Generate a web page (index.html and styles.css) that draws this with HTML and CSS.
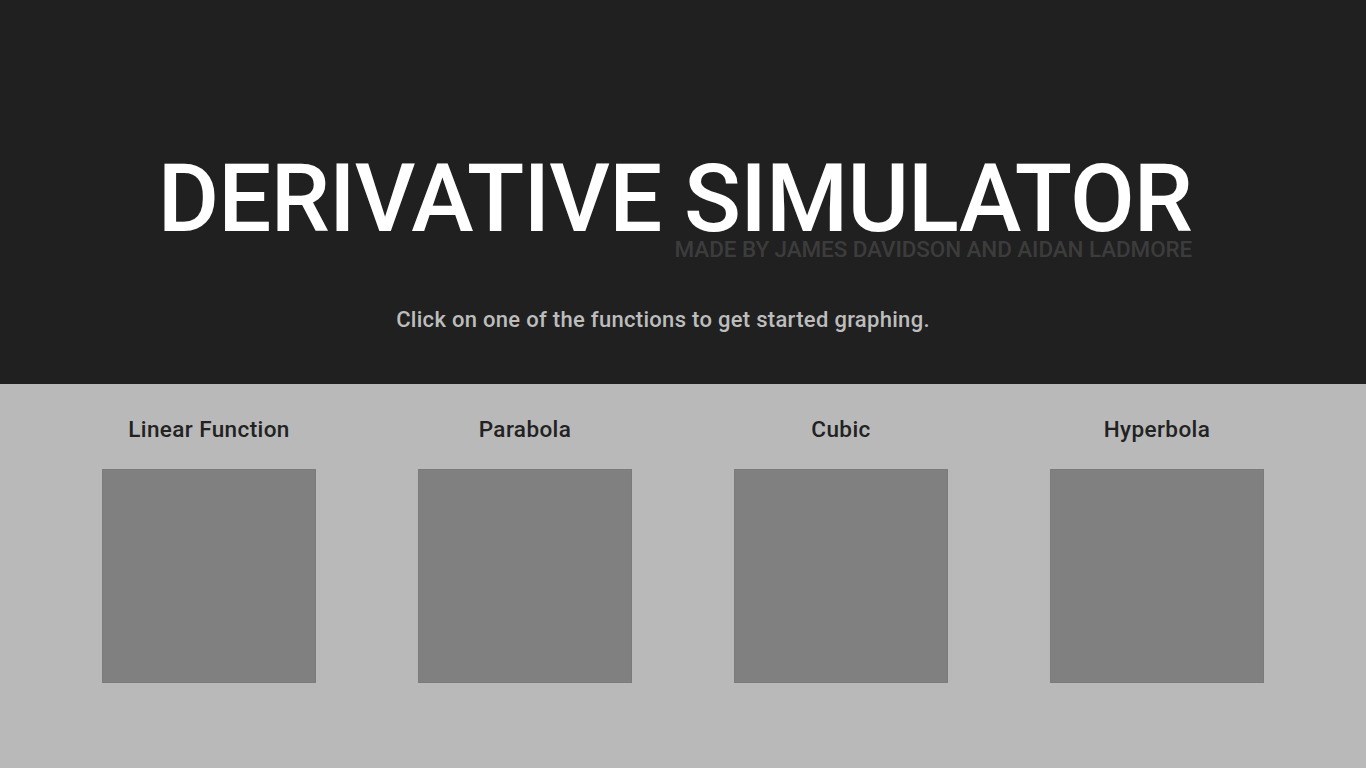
FILE: index.html
```html
<!DOCTYPE html>
<html>
<head>
<meta charset="utf-8">
<link rel="stylesheet" href="styles.css">
</head>
<body>
<header class="hero">
  <div class="title-block">
    <h1 class="title">DERIVATIVE SIMULATOR</h1>
    <div class="byline">MADE BY JAMES DAVIDSON AND AIDAN LADMORE</div>
  </div>
  <p class="intro">Click on one of the functions to get started graphing.</p>
</header>
<main class="functions">
  <div class="fn">
    <h2 class="fn-name">Linear Function</h2>
    <div class="fn-box"></div>
  </div>
  <div class="fn">
    <h2 class="fn-name">Parabola</h2>
    <div class="fn-box"></div>
  </div>
  <div class="fn">
    <h2 class="fn-name">Cubic</h2>
    <div class="fn-box"></div>
  </div>
  <div class="fn">
    <h2 class="fn-name">Hyperbola</h2>
    <div class="fn-box"></div>
  </div>
</main>
</body>
</html>
```
FILE: styles.css
```css
* { box-sizing: border-box; }
html, body { margin: 0; padding: 0; }
body {
  font-family: Roboto, "DejaVu Sans", sans-serif;
  background: #b9b9b9;
  width: 1366px;
  height: 768px;
  overflow: hidden;
}
.hero {
  background: #202020;
  height: 384px;
  display: flex;
  flex-direction: column;
  align-items: center;
  padding-top: 161px;
}
.title-block {
  display: flex;
  flex-direction: column;
  align-items: flex-end;
  margin-left: -16px;
}
.title {
  margin: 0;
  color: #ffffff;
  font-weight: 500;
  font-size: 94px;
  line-height: 76px;
  letter-spacing: -0.8px;
}
.byline {
  color: #3c3c3c;
  font-size: 22.5px;
  font-weight: 500;
  line-height: 22px;
  margin-top: 1px;
  letter-spacing: -0.1px;
}
.intro {
  margin: 47px 0 0 -40px;
  color: #bdbdbd;
  font-size: 22px;
  font-weight: 500;
  line-height: 26px;
  letter-spacing: 0.3px;
}
.functions {
  display: grid;
  grid-template-columns: repeat(4, 316px);
  justify-content: center;
  padding-top: 414px;
  margin-top: -384px;
}
.fn {
  display: flex;
  flex-direction: column;
  align-items: center;
}
.fn-name {
  margin: 0;
  color: #222222;
  font-size: 22.5px;
  font-weight: 500;
  line-height: 30px;
  height: 55px;
  letter-spacing: 0.4px;
}
.fn-box {
  width: 214px;
  height: 214px;
  background: #808080;
  border: 1px solid #7b7b7b;
}
```
